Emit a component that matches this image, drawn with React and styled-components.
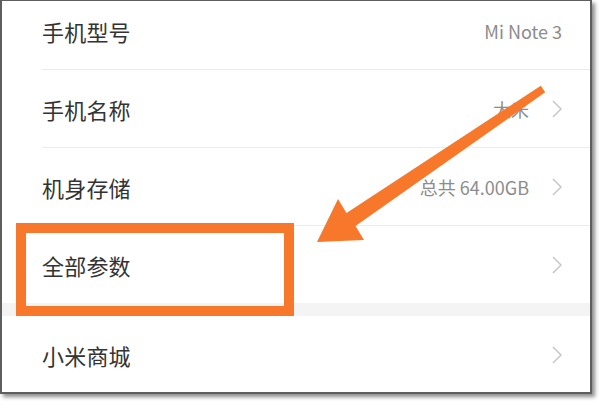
import React from "react";
import styled, { createGlobalStyle } from "styled-components";

const Global = createGlobalStyle`
  html, body { margin: 0; padding: 0; background: #ffffff; }
  body { font-family: "Noto Sans CJK SC", "Noto Sans", sans-serif; }
`;

const Stage = styled.div`
  position: relative;
  width: 600px;
  height: 404px;
  overflow: hidden;
`;

const Frame = styled.div`
  position: relative;
  box-sizing: border-box;
  width: 592px;
  height: 394px;
  background: #ffffff;
  border-style: solid;
  border-color: #5e5e5e;
  border-width: 1px 2px 2px 2px;
  box-shadow: 3px 3px 4px rgba(0, 0, 0, 0.45);
  overflow: hidden;
`;

const List = styled.div`
  display: flex;
  flex-direction: column;
  margin-top: -9px;
`;

const Row = styled.div`
  display: flex;
  align-items: center;
  height: 77px;
  padding: 0 28px 0 40px;
`;

const Divider = styled.div`
  height: 1px;
  margin-left: 40px;
  background: #ececec;
`;

const Gap = styled.div`
  height: 13px;
  background: #f4f4f4;
`;

const Label = styled.span`
  flex: 1;
  font-size: 22px;
  color: #333333;
  letter-spacing: 0.2px;
`;

const Value = styled.span`
  font-size: 18px;
  color: #8c8c8c;
`;

const ChevronBox = styled.svg`
  width: 10px;
  height: 18px;
  margin-left: ${(p) => (p.$withValue ? "23px" : "0")};
  flex: none;
`;

const Highlight = styled.div`
  position: absolute;
  left: 16px;
  top: 223px;
  width: 278px;
  height: 93px;
  box-sizing: border-box;
  border: 10px solid #f7782b;
  pointer-events: none;
`;

const ArrowLayer = styled.svg`
  position: absolute;
  left: 0;
  top: 0;
  width: 600px;
  height: 404px;
  pointer-events: none;
`;

const Chevron = ({ withValue }) => (
  <ChevronBox viewBox="0 0 10 18" $withValue={withValue}>
    <polyline points="1,1 9,9 1,17" fill="none" stroke="#c6c6c6" strokeWidth="1.5" />
  </ChevronBox>
);

const rows = [
  { label: "手机型号", value: "Mi Note 3", chevron: false },
  { label: "手机名称", value: "大米", chevron: true },
  { label: "机身存储", value: "总共 64.00GB", chevron: true },
  { label: "全部参数", value: null, chevron: true },
];

export default function App() {
  return (
    <>
      <Global />
      <Stage>
        <Frame>
          <List>
            {rows.map((r, i) => (
              <React.Fragment key={r.label}>
                {i > 0 && <Divider />}
                <Row>
                  <Label>{r.label}</Label>
                  {r.value && <Value>{r.value}</Value>}
                  {r.chevron && <Chevron withValue={!!r.value} />}
                </Row>
              </React.Fragment>
            ))}
            <Gap />
            <Row>
              <Label>小米商城</Label>
              <Chevron withValue={false} />
            </Row>
          </List>
        </Frame>
        <Highlight />
        <ArrowLayer viewBox="0 0 600 404">
          <polygon
            points="317,242 338,199 346.5,212.9 540.8,85.7 545.2,92.3 355.5,226.1 364,240"
            fill="#f7782b"
          />
        </ArrowLayer>
      </Stage>
    </>
  );
}
